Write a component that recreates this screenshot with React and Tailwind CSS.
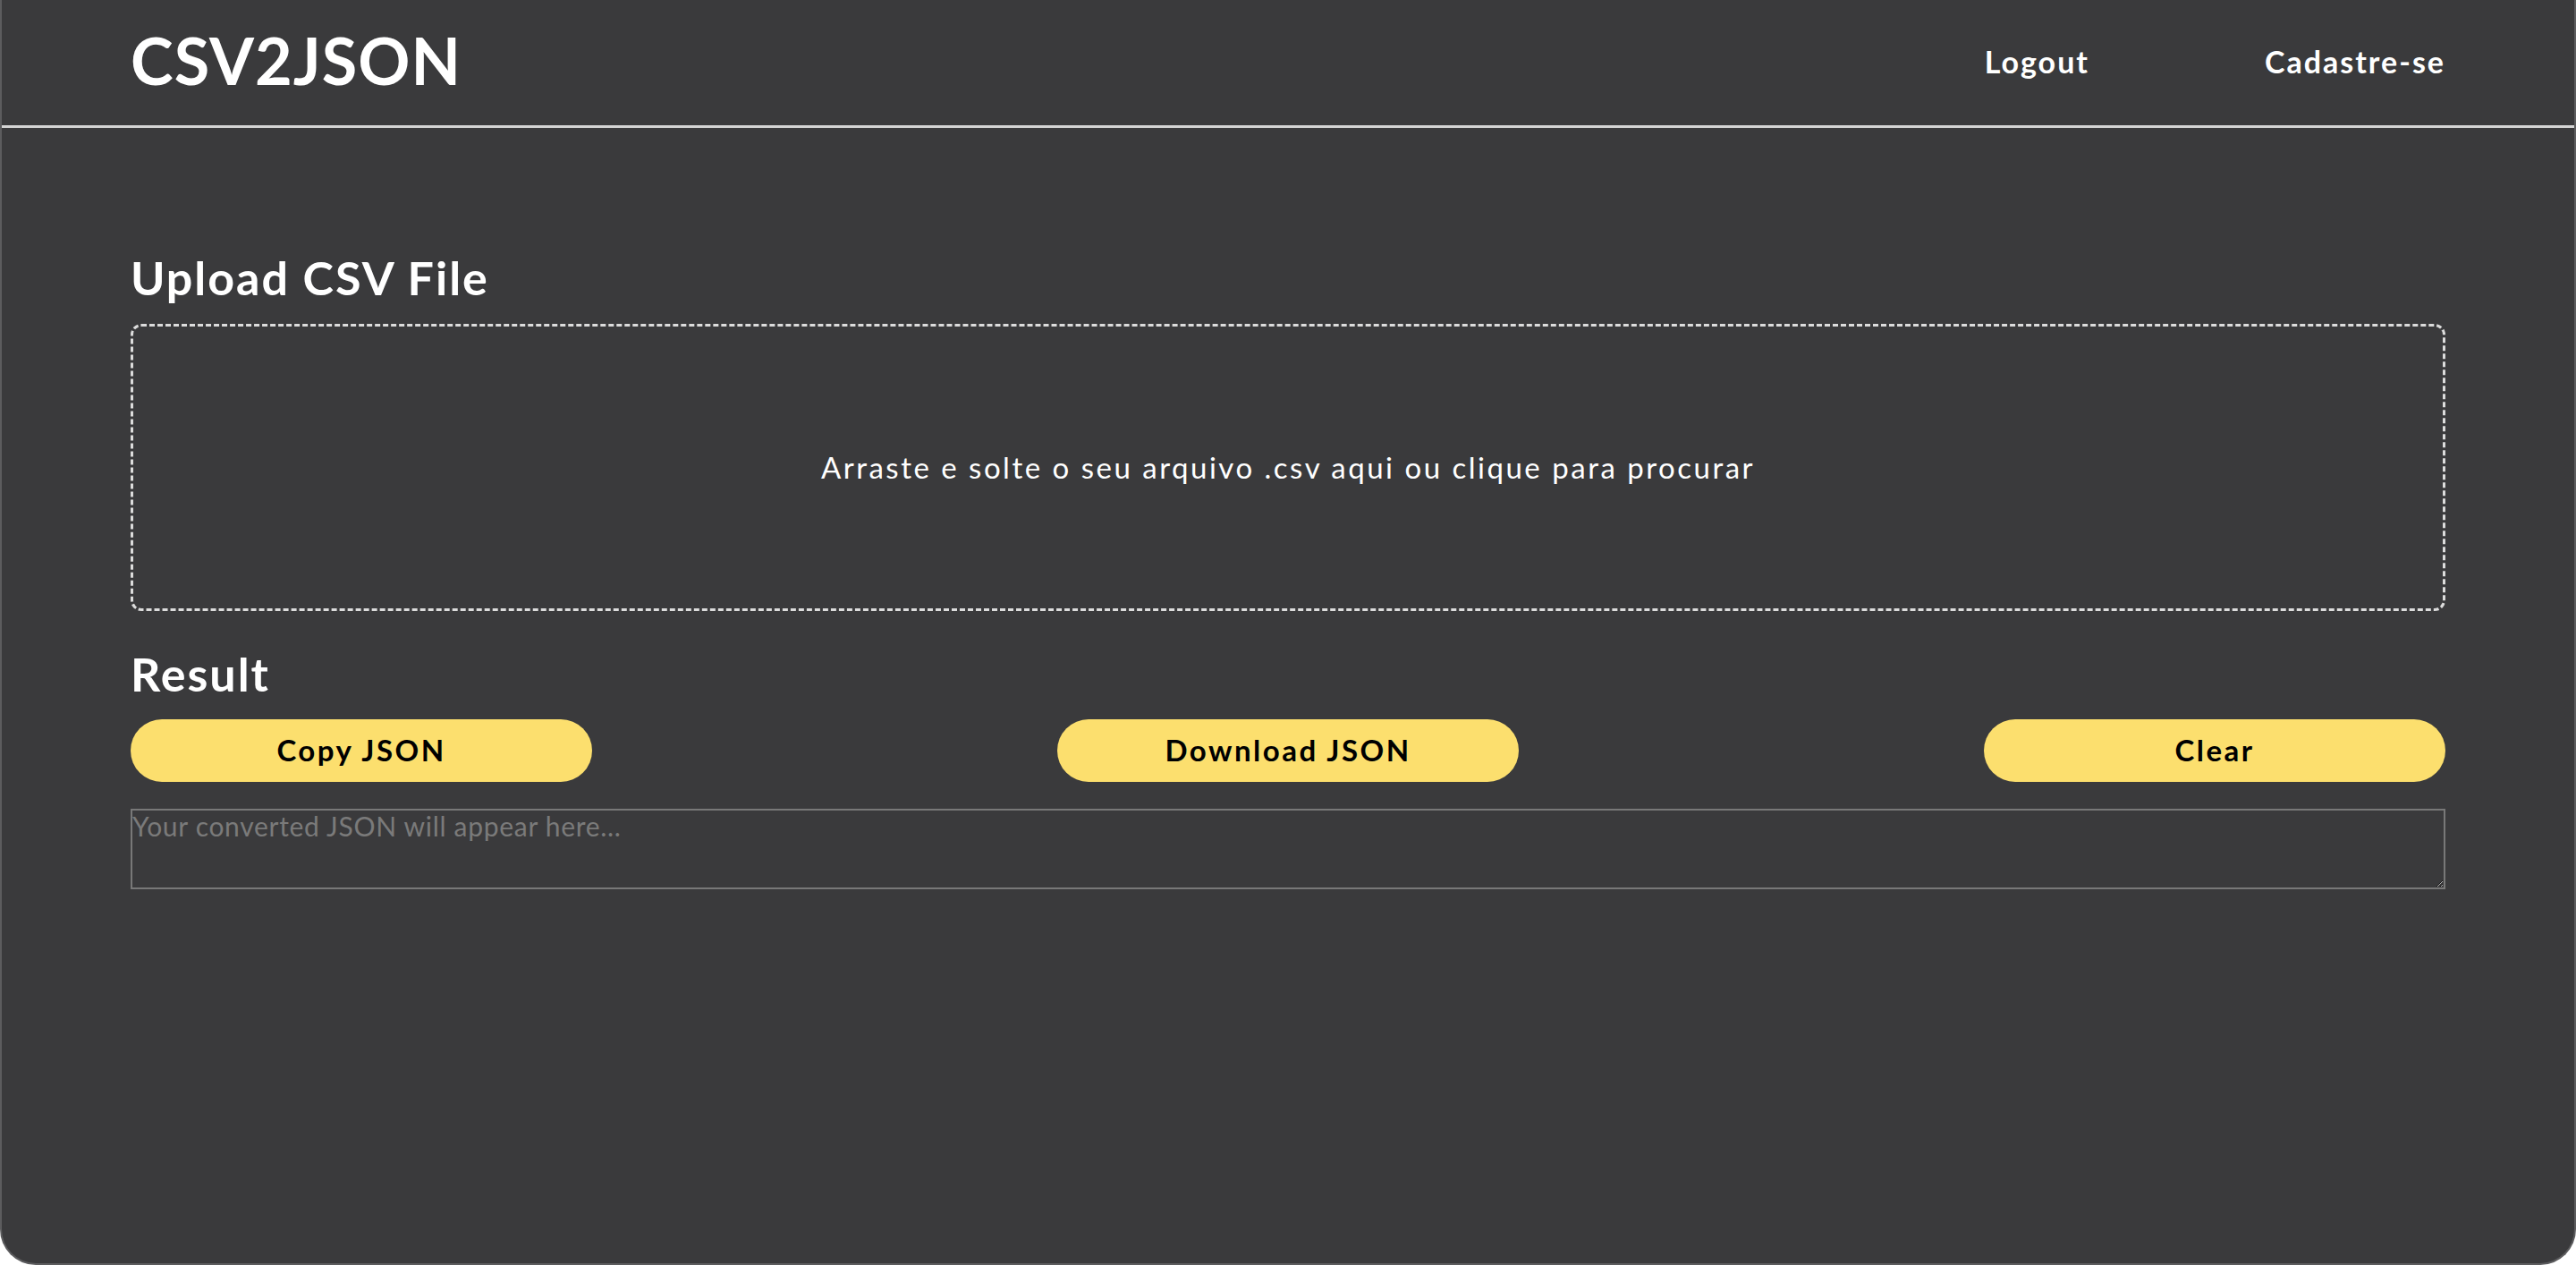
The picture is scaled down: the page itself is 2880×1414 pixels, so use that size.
const App = () => {
  return (
    <div
      className="min-h-[1414px] bg-[#3a3a3c] border-x-2 border-b-2 border-[#5c5c5e] rounded-b-[40px] overflow-hidden text-white"
      style={{ fontFamily: "Lato, 'Noto Sans', sans-serif" }}
    >
      {/* header */}
      <header className="h-[143px] px-[144px] flex items-center justify-between border-b-[3px] border-[#d4d4d4]">
        <h1 className="-mt-[6px] text-[72px] font-bold leading-none tracking-[1px]">CSV2JSON</h1>
        <nav className="-mt-[4px] flex items-center gap-[196px] text-[34px] font-bold tracking-[2px]">
          <a href="#">Logout</a>
          <a href="#">Cadastre-se</a>
        </nav>
      </header>

      <main className="px-[144px] pt-[136px]">
        {/* upload */}
        <h2 className="text-[52px] font-bold leading-[62px] tracking-[2px]">Upload CSV File</h2>
        <div className="mt-[21px] h-[321px] border-[3px] border-dashed border-[#dcdcdc] rounded-[12px] flex items-center justify-center">
          <p className="text-[33px] tracking-[2.5px]">Arraste e solte o seu arquivo .csv aqui ou clique para procurar</p>
        </div>

        {/* result */}
        <h2 className="mt-[39px] text-[52px] font-bold leading-[62px] tracking-[2px]">Result</h2>
        <div className="mt-[20px] flex justify-between text-[33px] font-bold tracking-[2.5px]">
          <button className="h-[70px] w-[516px] rounded-full bg-[#fcdf6e] text-black">Copy JSON</button>
          <button className="h-[70px] w-[516px] rounded-full bg-[#fcdf6e] text-black">Download JSON</button>
          <button className="h-[70px] w-[516px] rounded-full bg-[#fcdf6e] text-black">Clear</button>
        </div>
        <textarea
          className="mt-[30px] block w-full h-[90px] p-0 border-2 border-[#787878] bg-transparent text-[30px] leading-[34px] tracking-[0.7px] text-white placeholder:text-[#7a7a7a] outline-none"
          placeholder="Your converted JSON will appear here..."
        />
      </main>
    </div>
  );
};

export default App;
